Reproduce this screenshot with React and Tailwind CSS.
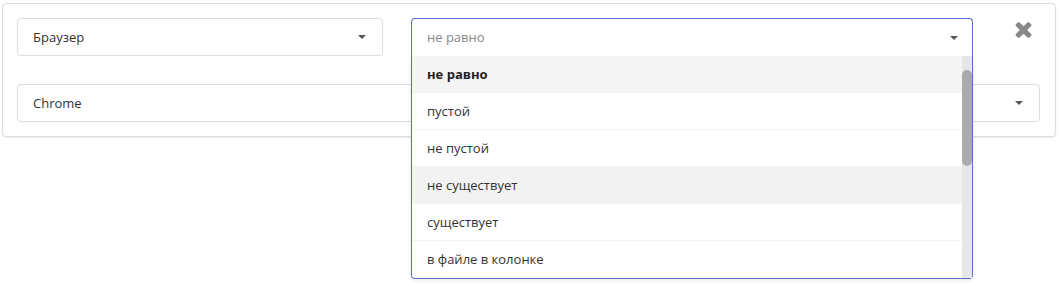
import React from 'react';

const options = [
  { label: 'не равно', selected: true },
  { label: 'пустой' },
  { label: 'не пустой' },
  { label: 'не существует', hover: true },
  { label: 'существует' },
  { label: 'в файле в колонке' },
];

const Caret = () => (
  <span className="w-0 h-0 border-x-[4px] border-x-transparent border-t-[4px] border-t-[#555]" />
);

const Select = ({ value, className = '' }) => (
  <div
    className={`h-[38px] flex items-center justify-between pl-[15px] pr-[16px] border border-[#ddd] rounded-[4px] bg-white text-[#333] ${className}`}
  >
    <span className="pt-[1px]">{value}</span>
    <Caret />
  </div>
);

const CloseIcon = () => (
  <svg width="17" height="16" viewBox="0 228 1188 1188" fill="#888">
    <path d="M1188 1184q0 40-28 68l-136 136q-28 28-68 28t-68-28l-294-294-294 294q-28 28-68 28t-68-28l-136-136q-28-28-28-68t28-68l294-294-294-294q-28-28-28-68t28-68l136-136q28-28 68-28t68 28l294 294 294-294q28-28 68-28t68 28l136 136q28 28 28 68t-28 68l-294 294 294 294q28 28 28 68z" />
  </svg>
);

export default function App() {
  return (
    <div className="w-[1059px] h-[286px] bg-white font-['Open_Sans',sans-serif] text-[13px]">
      <div className="ml-[2px] mt-[3px] w-[1054px] border border-[#ddd] rounded-[4px] shadow-[0_1px_2px_rgba(0,0,0,0.08)] bg-white pt-[14px] pl-[14px] pr-[15px] pb-[14px]">
        <div className="flex items-start h-[38px]">
          <Select value="Браузер" className="w-[366px]" />

          {/* open operator select */}
          <div className="relative ml-[28px] w-[562px] z-10">
            <div className="h-[38px] flex items-center justify-between pl-[15px] pr-[14px] border border-b-0 border-[#5b6bc9] rounded-t-[4px] bg-white">
              <span className="pt-[1px] text-[#888]">не равно</span>
              <Caret />
            </div>
            <div className="absolute left-0 right-0 top-full flex border border-t-0 border-[#5b6bc9] rounded-b-[4px] bg-white shadow-[0_2px_4px_rgba(0,0,0,0.08)]">
              <ul className="flex-1">
                {options.map((o) => (
                  <li
                    key={o.label}
                    className={`h-[37px] flex items-center pl-[15px] pt-[1px] border-b border-[#f2f2f2] last:border-b-0 ${
                      o.selected ? 'bg-[#f5f5f5] font-bold text-[#222]' : o.hover ? 'bg-[#f2f2f2] text-[#333]' : 'text-[#333]'
                    }`}
                  >
                    {o.label}
                  </li>
                ))}
              </ul>
              <div className="w-[10px] bg-[#e6e6e6] pt-[14px]">
                <div className="h-[96px] w-[10px] rounded-full bg-[#ababab]" />
              </div>
            </div>
          </div>

          <button className="ml-auto mr-[8px] mt-[4px]">
            <CloseIcon />
          </button>
        </div>

        <Select value="Chrome" className="mt-[28px] pr-[14px]" />
      </div>
    </div>
  );
}
